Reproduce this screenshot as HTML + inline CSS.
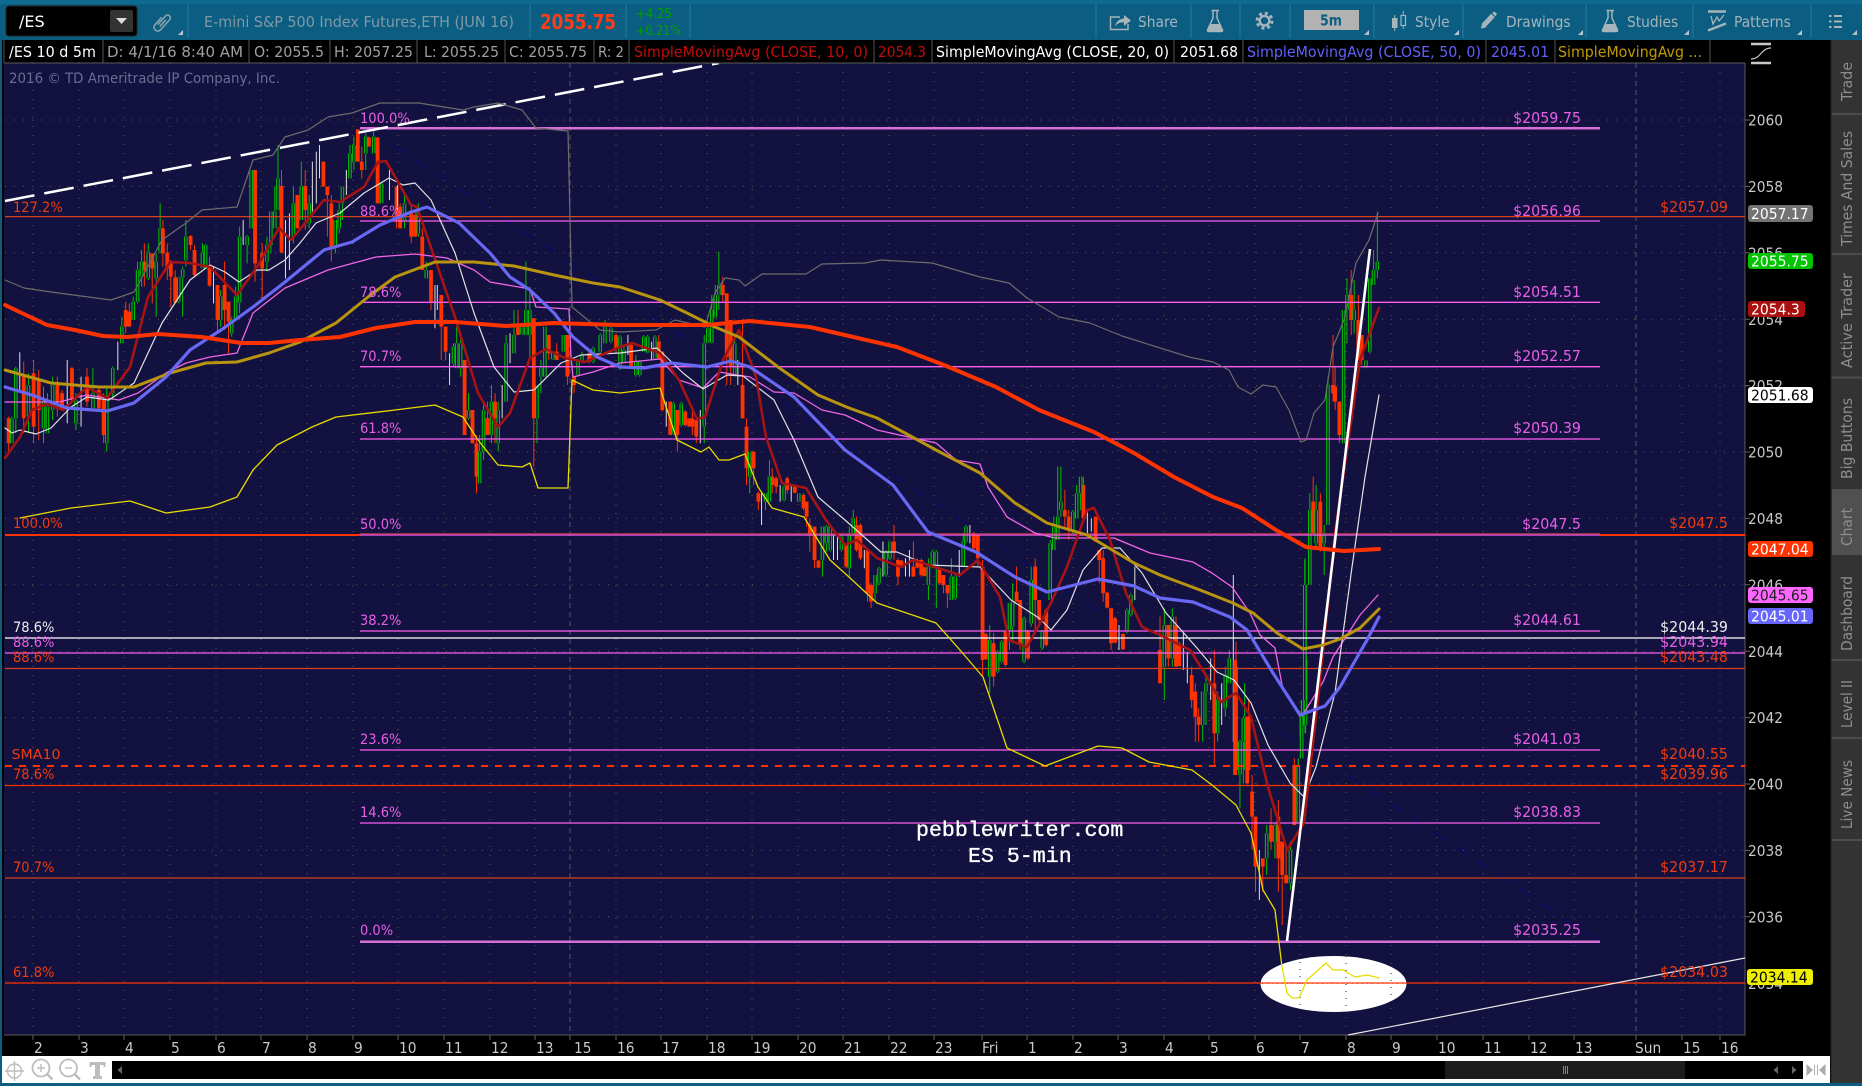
<!DOCTYPE html>
<html lang="en"><head><meta charset="utf-8"><title>/ES chart</title>
<style>
html,body{margin:0;padding:0;background:#000;width:1862px;height:1086px;overflow:hidden}
svg{display:block;position:absolute;left:0;top:0}
text{font-family:"DejaVu Sans","Liberation Sans",sans-serif;font-size:14.5px}
.t{transform:scaleX(.9);transform-box:fill-box;transform-origin:0 50%}
.e{font-size:15px;text-anchor:end;transform:scaleX(.95);transform-box:fill-box;transform-origin:100% 50%}
.ax{font-size:15.3px;fill:#c8c8c8;transform:scaleX(.9);transform-box:fill-box;transform-origin:0 50%}
.tag{font-size:15.5px;transform:scaleX(.9);transform-box:fill-box;transform-origin:0 50%}
.h{font-size:15px}
.tb{font-size:15px;fill:#a6b4bb;transform:scaleX(.92);transform-box:fill-box;transform-origin:0 50%}
.tab{font-size:15px;fill:#8e8e8e}
.pk{fill:#e85fe8}.rd{fill:#ee3c10}
path,polyline,line{vector-effect:non-scaling-stroke}
polyline{fill:none;stroke-linejoin:round;stroke-linecap:round}
.ow{stroke:#ff3300;stroke-width:1;fill:none}
.ob{stroke:#ff3300;stroke-width:3.8;fill:none}
.gw{stroke:#00c000;stroke-width:1;fill:none}
.w{stroke:#e0e0e0;stroke-width:1;fill:none}
</style></head><body>
<svg width="1862" height="1086" viewBox="0 0 1862 1086" xmlns="http://www.w3.org/2000/svg">
<!-- frame -->
<rect width="1862" height="1086" fill="#0b5d82"/>
<rect width="1862" height="4" fill="#0f6a8f"/>
<rect x="2" y="40" width="1860" height="1043" fill="#000"/>
<rect x="4" y="63" width="1741" height="972" fill="#13113f"/>
<rect x="2" y="1056" width="1828" height="27" fill="#fff"/>
<rect x="112" y="1061" width="1691" height="18" fill="#000"/>
<rect x="1445" y="1061" width="240" height="18" fill="#1c1c1c"/>
<path d="M1563.5 1066V1074M1565.5 1066V1074M1567.5 1066V1074" stroke="#888" stroke-width="1"/>
<path d="M122 1066V1074L117.5 1070ZM1778 1066V1074L1773.5 1070ZM1792 1066V1074L1796.5 1070Z" fill="#666"/>
<path d="M1813 1070L1806.5 1064V1076ZM1819 1070L1825.5 1064V1076Z" fill="#aaa"/><path d="M1814.5 1065V1075M1817.5 1065V1075" stroke="#aaa"/>
<!-- footer icons -->
<g fill="none" stroke="#bdbdbd" stroke-width="1.4">
<circle cx="14.5" cy="1071" r="7"/><path d="M14.5 1061V1081M5 1071H24"/>
<circle cx="41" cy="1068" r="8.5" stroke-width="1.8"/><path d="M47 1074L52.5 1079.5" stroke-width="2.4"/><path d="M37 1068H45M41 1064V1072"/>
<circle cx="68.5" cy="1068" r="8.5" stroke-width="1.8"/><path d="M74.5 1074L80 1079.5" stroke-width="2.4"/><path d="M65 1068H72"/>
</g>
<path d="M89.5 1062H105.5V1067H103.5V1065H100V1076H102V1079H93V1076H95V1065H91.5V1067H89.5Z" fill="#bdbdbd"/>
<!-- side tabs -->
<rect x="1831" y="40" width="31" height="1043" fill="#333"/>
<path d="M1831 114H1862M1831 254H1862M1831 377.5H1862M1831 660H1862M1831 738H1862M1831 840H1862" stroke="#4d4d4d" stroke-width="2"/>
<rect x="1832" y="489" width="30" height="66" fill="#505050"/>
<path d="M1831 40V1083" stroke="#222" stroke-width="1"/>
<text class="tab" transform="translate(1852,101) rotate(-90)" textLength="39" lengthAdjust="spacingAndGlyphs">Trade</text>
<text class="tab" transform="translate(1852,246) rotate(-90)" textLength="115" lengthAdjust="spacingAndGlyphs">Times And Sales</text>
<text class="tab" transform="translate(1852,368) rotate(-90)" textLength="95" lengthAdjust="spacingAndGlyphs">Active Trader</text>
<text class="tab" transform="translate(1852,479) rotate(-90)" textLength="81" lengthAdjust="spacingAndGlyphs">Big Buttons</text>
<text class="tab" transform="translate(1852,546) rotate(-90)" textLength="38" lengthAdjust="spacingAndGlyphs">Chart</text>
<text class="tab" transform="translate(1852,651) rotate(-90)" textLength="75" lengthAdjust="spacingAndGlyphs">Dashboard</text>
<text class="tab" transform="translate(1852,728) rotate(-90)" textLength="48" lengthAdjust="spacingAndGlyphs">Level II</text>
<text class="tab" transform="translate(1852,829) rotate(-90)" textLength="69" lengthAdjust="spacingAndGlyphs">Live News</text>
<!-- y-axis scale icon -->
<path d="M1751 44H1771M1751 63H1771" stroke="#c8c8c8" stroke-width="2.5"/><path d="M1751 59C1761 59 1761 48 1771 48" stroke="#c8c8c8" stroke-width="1.2" fill="none"/>
<!-- grid -->
<path d="M33 63V1035M79 63V1035M124 63V1035M170 63V1035M216 63V1035M261 63V1035M307 63V1035M353 63V1035M398 63V1035M444 63V1035M490 63V1035M535 63V1035M616 63V1035M661 63V1035M707 63V1035M752 63V1035M798 63V1035M843 63V1035M889 63V1035M934 63V1035M982 63V1035M1027 63V1035M1073 63V1035M1118 63V1035M1164 63V1035M1209 63V1035M1255 63V1035M1300 63V1035M1346 63V1035M1391 63V1035M1437 63V1035M1483 63V1035M1529 63V1035M1574 63V1035M1682 63V1035M1720 63V1035" stroke="#5a5a44" stroke-width="1" stroke-dasharray="1 8" fill="none"/>
<path d="M5 120H1745M5 186.4H1745M5 252.8H1745M5 319.2H1745M5 385.6H1745M5 452H1745M5 518.4H1745M5 584.8H1745M5 651.2H1745M5 717.6H1745M5 784H1745M5 850.4H1745M5 916.8H1745M5 983.2H1745" stroke="#5a5a44" stroke-width="1" stroke-dasharray="1 8" fill="none"/>
<path d="M570 63V1035M1636 63V1035" stroke="#56565c" stroke-width="1" stroke-dasharray="5 4" fill="none"/>
<path d="M33 1035V1040M79 1035V1040M124 1035V1040M170 1035V1040M216 1035V1040M261 1035V1040M307 1035V1040M353 1035V1040M398 1035V1040M444 1035V1040M490 1035V1040M535 1035V1040M570 1035V1040M616 1035V1040M661 1035V1040M707 1035V1040M752 1035V1040M798 1035V1040M843 1035V1040M889 1035V1040M934 1035V1040M982 1035V1040M1027 1035V1040M1073 1035V1040M1118 1035V1040M1164 1035V1040M1209 1035V1040M1255 1035V1040M1300 1035V1040M1346 1035V1040M1391 1035V1040M1437 1035V1040M1483 1035V1040M1529 1035V1040M1574 1035V1040M1636 1035V1040M1682 1035V1040M1720 1035V1040M1745 120H1750M1745 186.4H1750M1745 252.8H1750M1745 319.2H1750M1745 385.6H1750M1745 452H1750M1745 518.4H1750M1745 584.8H1750M1745 651.2H1750M1745 717.6H1750M1745 784H1750M1745 850.4H1750M1745 916.8H1750" stroke="#666" stroke-width="1" fill="none"/>
<path d="M4 1035H1745V63" stroke="#5a5a5a" stroke-width="1" fill="none"/>
<!-- navy diagonal -->
<line x1="370" y1="130" x2="1600" y2="942" stroke="#0a0a6a" stroke-width="1.2" stroke-dasharray="14 12"/>
<!-- ellipse -->
<ellipse cx="1333.5" cy="984" rx="73" ry="28" fill="#fff"/>
<path d="M1300 962V1010M1346 956V1012M1391 966V1004" stroke="#222" stroke-width="1" stroke-dasharray="1 6" fill="none"/>
<path d="M1262 983.2H1405" stroke="#222" stroke-width="1" stroke-dasharray="1 4" fill="none"/>
<!-- candles A -->
<g transform="translate(0,100) scale(.3954,.3333)">
<path class="ow" d="M22 950V1055M60 785V1000M85 780V1030M98 810V1020M145 830V950M157 870V930M182 800V900M220 805V920M250 860V930M262 880V1030M318 605V700M327 610V680M365 430V560M385 470V610M412 360V500M423 430V540M432 480V620M443 510V610M482 405V450M492 435V530M530 470V560M550 555V700M568 485V690M578 605V760M645 210V545M663 430V600M712 210V460M752 285V385M772 210V390M818 185V260M828 260V410M838 285V485M905 88V185M915 140V235M933 110V140M955 112V310M1003 260V385M1012 310V385M1040 310V430M1050 335V410M1068 385V510M1090 510V630M1116 585V780M1127 680V780M1175 780V1000M1195 930V1030M1205 1005V1180M1233 905V1005M1252 880V1030M1310 630V705M1350 655V1100M1388 705V780M1408 730V780M1435 705V855M1452 830V880M1490 755V790M1558 700V760"/>
<path class="ob" d="M22 955V1030M60 828V955M85 820V980M98 840V930M145 855V905M157 880V925M182 805V900M220 830V905M250 870V925M262 900V1005M318 630V680M327 635V680M365 485V510M385 460V505M412 385V460M423 458V505M432 485V530M443 532V608M482 408V435M492 450V525M530 495V557M550 555V660M568 555V630M578 605V665M645 210V490M663 460V505M712 258V458M752 285V385M772 258V330M818 185V260M828 260V285M838 310V445M905 88V185M915 185V210M933 112V140M955 112V310M1003 260V360M1012 320V385M1040 340V410M1050 345V410M1068 410V510M1090 510V605M1116 585V680M1127 680V755M1175 780V1005M1195 930V1030M1205 1030V1130M1233 955V1005M1252 905V955M1310 680V705M1350 655V955M1388 705V760M1408 755V780M1435 705V830M1452 830V855M1490 760V785M1558 705V745"/>
<path class="gw" d="M30 950V1030M40 800V1000M72 820V1000M110 860V1030M120 880V1000M133 830V960M192 880V990M235 805V930M270 860V1055M285 800V900M308 650V730M337 590V660M348 485V610M358 450V560M375 430V540M395 460V650M405 310V460M452 530V610M462 500V650M470 360V500M512 430V500M520 432V500M558 570V680M586 650V710M596 560V660M606 380V640M625 405V490M635 210V385M675 410V515M685 335V460M695 260V385M703 135V330M742 260V430M762 185V360M782 285V385M848 360V460M858 310V400M866 260V360M885 135V235M895 110V210M925 100V210M945 90V160M965 245V310M1023 285V385M1058 310V410M1078 485V535M1147 730V800M1155 680V800M1165 700V830M1185 880V960M1213 1005V1150M1223 905V1080M1243 855V1030M1260 905V1055M1280 705V905M1300 630V760M1320 680V705M1330 485V680M1340 560V780M1358 855V1030M1368 780V880M1378 680V830M1398 755V780M1425 705V755M1462 780V830M1472 755V790M1500 740V790M1518 700V760M1530 660V730M1545 680V730"/>
<g fill="none" stroke="#00c000" stroke-width="3.6"><path id="gA" vector-effect="non-scaling-stroke" d="M30 955V1030M40 805V955M72 855V950M110 905V985M120 920V1000M133 855V930M192 900V970M235 880V925M270 895V1030M285 805V880M308 680V730M337 605V660M348 510V605M358 485V530M375 455V535M395 485V535M405 385V455M452 532V605M462 508V532M470 410V480M512 458V505M520 435V505M558 590V660M586 660V700M596 590V660M606 410V608M625 410V435M635 210V385M675 435V485M685 335V435M695 335V385M703 235V330M742 310V410M762 258V360M782 310V370M848 360V435M858 330V385M866 260V310M885 160V235M895 135V185M925 110V160M945 110V160M965 250V310M1023 310V360M1058 330V400M1078 510V535M1147 740V790M1155 730V805M1165 730V805M1185 930V955M1213 1055V1150M1223 930V1055M1243 905V1005M1260 930V1030M1280 730V905M1300 705V760M1320 682V703M1330 630V705M1340 630V705M1358 855V955M1368 805V830M1378 680V830M1398 757V778M1425 705V755M1462 785V825M1472 765V785M1500 745V785M1518 705V755M1530 680V730M1545 685V725"/></g>
<use href="#gA" stroke="#13113f" stroke-width="1.4"/>
<path class="w" d="M50 757V870M170 780V970M205 830V980M298 725V810M540 500V610M615 360V435M722 360V535M732 340V510M790 185V335M800 155V310M808 135V235M876 210V285M985 210V300M1005 255V330M1100 555V685M1106 555V630M1137 760V855M1270 855V955M1290 700V790"/>
</g>
<!-- candles B -->
<g transform="translate(620,230) scale(.3954,.3333)">
<path class="ow" d="M28 340V410M98 315V385M107 365V545M127 515V615M145 540V665M165 540V590M175 565V590M183 540V615M193 565V640M260 140V215M270 190V465M280 270V465M310 280V565M320 565V765M338 665V765M350 785V840M385 715V790M395 740V790M423 740V790M442 765V790M464 790V840M472 815V890M480 865V965M492 890V1015M502 990V1015M572 940V1015M598 860V965M608 880V990M626 960V1115M635 1060V1135M693 885V990M703 985V1065M712 990V1015M742 935V1040M752 985V1015M762 985V1040M770 1010V1040M808 1010V1065M818 1035V1090M828 1065V1135M895 905V960M905 915V1010M917 990V1341M925 1210V1290M945 1210V1370M975 1200V1310M1003 1010V1115M1012 1110V1260M1032 1200V1290M1050 985V1200M1060 1110V1190M1078 1135V1250M1125 780V890M1135 840V930M1172 740V865M1203 860V935M1212 960V1060M1222 960V1115M1232 1085V1135M1242 1135V1260M1252 1160V1240M1272 1210V1260"/>
<path class="ob" d="M28 345V410M98 335V385M107 365V540M127 515V615M145 540V615M165 545V585M175 565V590M183 565V590M193 570V620M260 165V195M270 190V380M280 270V410M310 465V565M320 590V715M338 665V715M350 790V815M385 740V765M395 745V770M423 745V780M442 770V788M464 795V835M472 815V860M480 885V915M492 890V990M502 992V1013M572 945V1010M598 885V960M608 885V985M626 960V1090M635 1065V1115M693 935V965M703 990V1040M712 992V1013M742 1010V1040M752 990V1013M762 990V1035M770 1012V1038M808 1015V1060M818 1035V1065M828 1065V1090M895 910V955M905 915V985M917 1010V1290M925 1212V1288M945 1240V1340M975 1205V1305M1003 1085V1115M1012 1110V1240M1032 1205V1285M1050 1010V1110M1060 1110V1170M1078 1140V1245M1125 840V860M1135 860V900M1172 765V865M1203 860V935M1212 960V990M1222 985V1090M1232 1088V1133M1242 1135V1240M1252 1165V1238M1272 1212V1258"/>
<path class="gw" d="M0 315V420M10 345V400M40 375V440M50 395V440M60 315V365M70 315V370M88 315V390M135 515V615M155 515V590M213 315V640M222 290V340M232 195V340M241 165V265M250 65V240M290 315V440M328 665V790M368 790V840M378 690V815M415 765V815M452 790V815M512 890V1040M522 885V965M532 890V965M560 915V965M580 890V1040M590 840V915M645 1035V1115M655 1010V1065M673 960V1040M683 935V990M780 985V1110M790 960V1015M800 960V1135M838 985V1110M848 1035V1110M868 910V1010M875 885V940M935 1185V1390M955 1260V1330M965 1230V1300M985 1120V1260M993 1060V1240M1022 1160V1300M1040 1010V1190M1068 1200V1260M1088 930V1110M1097 860V960M1107 710V860M1115 710V860M1145 840V910M1155 765V865M1165 740V840M1282 1135V1210M1292 1090V1160"/>
<g fill="none" stroke="#00c000" stroke-width="3.6"><path id="gB" vector-effect="non-scaling-stroke" d="M0 320V415M10 360V400M40 395V435M50 395V435M60 320V365M70 320V368M88 320V385M135 520V612M155 520V585M213 340V590M222 295V338M232 240V338M241 195V262M250 165V195M290 340V438M328 665V740M368 790V815M378 740V815M415 770V810M452 790V815M512 890V990M522 890V940M532 890V960M560 920V960M580 915V1015M590 865V910M645 1035V1090M655 1015V1060M673 965V1035M683 935V985M780 1010V1065M790 965V1012M800 965V1010M838 1040V1110M848 1040V1105M868 935V1010M875 890V935M935 1230V1340M955 1265V1325M965 1235V1295M985 1120V1200M993 1115V1190M1022 1165V1295M1040 1050V1180M1068 1205V1255M1088 940V1110M1097 890V960M1107 860V930M1115 815V840M1145 845V905M1155 790V865M1165 740V790M1282 1140V1205M1292 1095V1155"/></g>
<use href="#gB" stroke="#13113f" stroke-width="1.4"/>
<path class="w" d="M20 315V375M80 335V390M117 515V590M203 540V640M298 390V465M358 790V885M405 765V815M433 765V815M540 915V990M550 915V990M618 960V1015M665 935V1040M722 985V1040M732 960V1040M858 960V1040M885 885V940M1182 840V910M1192 865V905M1262 1185V1260M1302 1010V1110"/>
</g>
<!-- candles C -->
<g transform="translate(1160,470) scale(.3333)">
<path class="ow" d="M0 440V640M25 470V590M48 440V590M58 515V590M95 590V715M106 640V815M116 715V815M163 540V885M228 515V900M266 690V900"/>
<path class="ob" d="M0 540V640M25 465V565M48 465V590M58 520V588M95 615V690M106 665V740M116 740V765M163 640V790M228 590V900M266 740V900"/>
<path class="gw" d="M13 415V690M37 415V590M128 665V815M138 620V765M173 665V815M196 590V740M208 540V640M240 815V900M254 640V900M435 265V790M424 690V810"/>
<g fill="none" stroke="#00c000" stroke-width="3.6"><path id="gC" vector-effect="non-scaling-stroke" d="M13 465V590M37 440V565M128 665V765M138 640V665M173 690V790M196 615V715M208 565V640M240 815V900M254 740V815M435 345V765M424 740V800"/></g>
<use href="#gC" stroke="#13113f" stroke-width="1.4"/>
<path class="w" d="M70 490V600M82 545V640M152 565V690M185 640V765M220 315V815"/>
</g>
<!-- candles D -->
<g transform="translate(1100,660) scale(.4859,.3333)">
<path class="ow" d="M278 0V345M303 170V370M313 345V570M320 470V695M335 595V695M352 445V570M367 420V695M375 545V795M383 570V670M400 295V495"/>
<path class="ob" d="M278 0V345M303 170V370M313 395V470M320 470V620M335 595V620M352 495V545M367 470V595M375 545V645M383 645V670M400 315V495"/>
<path class="gw" d="M288 240V445M295 170V370M343 495V645M360 490V595M392 545V690M408 295V490M415 120V295M423 0V220"/>
<g fill="none" stroke="#00c000" stroke-width="3.6"><path id="gD" vector-effect="non-scaling-stroke" d="M288 245V345M295 175V245M343 520V595M360 495V545M392 570V670M408 320V490M415 170V295M423 0V195"/></g>
<use href="#gD" stroke="#13113f" stroke-width="1.4"/>
<path class="w" d="M328 570V720"/>
</g>
<!-- candles E -->
<g transform="translate(1200,200) scale(.4223,.3333)">
<path class="ow" d="M268 830V1000M285 880V1055M315 405V605M320 500V630M330 605V730M358 210V405M375 285V480M383 405V495"/>
<path class="ob" d="M268 905V1000M285 905V1050M315 555V580M320 560V605M330 605V705M358 285V360M375 360V480M383 405V480"/>
<path class="gw" d="M248 1080V1500M260 880V1150M275 855V1050M294 975V1125M303 530V975M340 330V730M348 235V430M365 240V400M393 480V505M402 235V460M411 150V255M420 35V235"/>
<g fill="none" stroke="#00c000" stroke-width="3.6"><path id="gE" vector-effect="non-scaling-stroke" d="M248 1155V1500M260 930V1155M275 930V1030M294 1005V1030M303 555V975M340 330V730M348 285V330M365 330V360M393 482V503M402 235V455M411 210V255M420 185V210"/></g>
<use href="#gE" stroke="#13113f" stroke-width="1.4"/>
</g>
<!-- level lines -->
<path d="M360 128.3H1600" stroke="#d670d6" stroke-width="2.5" fill="none"/>
<path d="M360 221H1600M360 302.3H1600M360 366.7H1600M360 439H1600M360 535H1600M360 631H1600M360 750H1600M360 823H1600" stroke="#ff5cf0" stroke-width="1.3" fill="none"/>
<path d="M360 941.7H1600" stroke="#d670d6" stroke-width="2.5" fill="none"/>
<path d="M5 216.6H1745M5 668.5H1745M5 878H1745" stroke="#d6401c" stroke-width="1.2" fill="none"/>
<path d="M5 535H360M1600 535H1745" stroke="#ff3300" stroke-width="2" fill="none"/>
<path d="M360 533.8H1600" stroke="#c04040" stroke-width="1" fill="none"/>
<path d="M5 785.5H1745M5 983H1745" stroke="#ff3300" stroke-width="1.3" fill="none"/>
<path d="M5 638H1745" stroke="#fff" stroke-width="1.3" fill="none"/>
<path d="M5 653H1745" stroke="#ff5cf0" stroke-width="1.3" fill="none"/>
<path d="M5 766H1745" stroke="#ff3300" stroke-width="2" stroke-dasharray="7 7" fill="none"/>
<!-- trend lines -->
<line x1="5" y1="201" x2="719" y2="63" stroke="#fff" stroke-width="2.5" stroke-dasharray="30 10"/>
<line x1="1348" y1="1035" x2="1745" y2="958" stroke="#e8e8e8" stroke-width="1.2"/>
<!-- indicators -->
<polyline stroke="#6c6c6c" stroke-width="1.2" points="5,280 24,288 51,292 111,300 134,292 146,270 162,240 186,223 202,210 237,207 253,160 273,155 285,137 308,130 328,117 352,113 380,103 419,103 463,110 474,107 498,103 522,110 536,128 568,131 572,307 600,330 620,332 656,330 675,320 705,327 715,293 725,278 739,280 745,286 762,274 806,274 822,264 865,263 881,260 932,263 980,277 1009,283 1027,298 1059,317 1090,323 1122,336 1189,357 1213,362 1229,370 1238,387 1251,394 1263,385 1276,387 1289,410 1301,442 1306,440 1314,413 1325,400 1333,347 1344,320 1356,263 1369,240 1378,213"/>
<polyline stroke="#e6dc00" stroke-width="1.3" points="20,518 71,508 130,501 166,513 210,507 237,497 253,470 277,445 312,427 336,417 395,410 435,405 463,417 478,440 498,465 522,467 530,463 538,488 568,488 572,380 593,390 620,393 660,388 677,440 701,452 709,447 719,460 729,460 745,454 758,487 772,508 804,517 830,560 849,577 877,603 936,623 960,650 983,677 1007,748 1045,766 1098,746 1122,748 1149,762 1192,770 1212,785 1236,805 1251,833 1263,890 1275,910 1282,967 1287,993 1292,998 1299,998 1307,980 1326,963 1333,970 1343,970 1355,977 1367,975 1379,978"/>
<polyline stroke="#f066e6" stroke-width="1.3" points="5,402 59,402 87,395 119,400 138,393 166,373 186,363 210,357 237,353 253,313 285,288 328,270 376,257 415,254 447,258 474,270 490,282 530,289 536,307 569,309 571,357 573,377 593,372 620,363 660,359 679,380 703,388 719,372 750,377 774,392 794,393 822,410 845,415 877,430 913,438 936,443 956,460 980,464 988,487 1007,517 1035,533 1055,538 1114,538 1150,553 1193,562 1212,573 1232,587 1250,613 1260,635 1275,648 1283,690 1302,716 1323,682 1333,657 1360,615 1378,595"/>
<polyline stroke="#e2e2e2" stroke-width="1.2" points="5,428 12,433 20,430 36,434 51,428 71,407 87,397 109,400 134,383 162,323 190,280 210,265 225,272 239,282 257,270 269,270 285,260 300,243 316,223 340,213 364,193 389,178 403,185 415,183 431,200 455,253 474,313 494,367 514,392 534,390 561,363 581,355 620,353 657,348 683,373 703,389 727,375 743,376 774,400 794,440 818,497 845,520 881,552 897,552 928,565 980,567 1011,600 1039,618 1051,630 1067,610 1083,570 1102,548 1120,548 1142,573 1166,613 1197,648 1217,672 1234,680 1251,703 1268,745 1290,783 1304,797 1316,767 1328,720 1335,693 1352,567 1365,477 1379,395"/>
<polyline stroke="#a51414" stroke-width="2.6" points="5,458 20,437 32,410 47,404 63,410 87,387 107,398 130,367 148,297 170,262 190,263 210,267 237,295 257,267 279,228 291,240 324,200 340,202 364,187 378,162 386,161 411,205 417,207 455,317 478,393 498,427 510,413 530,358 546,349 565,358 585,362 620,347 632,343 660,353 679,380 697,419 705,417 723,360 739,330 756,377 766,437 782,483 806,488 826,520 845,545 857,540 877,558 901,567 913,560 944,570 960,575 978,560 1000,597 1009,640 1027,647 1051,603 1067,567 1087,510 1094,508 1110,540 1126,593 1142,627 1160,635 1190,650 1207,677 1221,702 1236,693 1251,717 1268,787 1287,850 1304,823 1319,690 1335,533 1360,360 1379,308"/>
<line x1="1287" y1="941" x2="1370" y2="249" stroke="#fff" stroke-width="2.6"/>
<polyline stroke="#b8940f" stroke-width="3" points="5,370 51,383 99,387 134,387 170,373 206,363 237,362 269,353 300,342 336,323 368,297 395,277 435,262 474,262 514,266 554,275 593,283 620,287 660,300 687,313 715,327 739,337 778,367 818,395 849,408 877,418 905,433 936,450 980,473 1015,503 1047,523 1087,535 1134,563 1160,575 1200,590 1233,603 1253,613 1277,633 1303,649 1323,645 1340,639 1360,628 1379,609"/>
<polyline stroke="#6868f4" stroke-width="3.2" points="5,387 32,395 67,408 107,411 134,403 166,377 190,350 221,330 253,307 285,282 324,250 352,242 380,225 411,212 427,207 459,223 490,253 510,277 530,290 554,313 573,337 597,357 620,367 644,368 671,363 707,367 731,361 750,367 794,397 845,450 893,485 928,532 976,552 1015,577 1047,592 1098,579 1134,586 1160,598 1193,602 1230,617 1247,630 1273,673 1300,715 1325,706 1340,687 1367,640 1379,617"/>
<polyline stroke="#ff3300" stroke-width="4" points="5,305 47,325 75,330 103,336 127,337 158,334 202,337 241,343 269,343 300,340 340,337 376,328 415,322 455,322 506,326 554,323 620,325 707,325 750,321 810,327 897,347 944,365 996,387 1039,410 1094,432 1134,453 1174,477 1213,497 1242,508 1276,530 1306,547 1344,551 1379,549"/>
<!-- labels -->
<g>
<text x="9" y="83" fill="#6c6c90" textLength="271" lengthAdjust="spacingAndGlyphs">2016 © TD Ameritrade IP Company, Inc.</text>
<text class="t rd" x="13" y="212">127.2%</text>
<text class="t rd" x="13" y="528">100.0%</text>
<text class="t" x="13" y="632" fill="#eee">78.6%</text>
<text class="t pk" x="13" y="647">88.6%</text>
<text class="t rd" x="13" y="662">88.6%</text>
<text class="rd" x="11.5" y="759" style="font-size:13.5px" textLength="49" lengthAdjust="spacingAndGlyphs">SMA10</text>
<text class="t rd" x="13" y="779">78.6%</text>
<text class="t rd" x="13" y="872">70.7%</text>
<text class="t rd" x="13" y="977">61.8%</text>
<text class="t pk" x="360" y="123">100.0%</text>
<text class="t pk" x="360" y="216">88.6%</text>
<text class="t pk" x="360" y="297">78.6%</text>
<text class="t pk" x="360" y="361">70.7%</text>
<text class="t pk" x="360" y="433">61.8%</text>
<text class="t pk" x="360" y="529">50.0%</text>
<text class="t pk" x="360" y="625">38.2%</text>
<text class="t pk" x="360" y="744">23.6%</text>
<text class="t pk" x="360" y="817">14.6%</text>
<text class="t pk" x="360" y="935">0.0%</text>
<text class="e pk" x="1581" y="123">$2059.75</text>
<text class="e pk" x="1581" y="216">$2056.96</text>
<text class="e pk" x="1581" y="297">$2054.51</text>
<text class="e pk" x="1581" y="361">$2052.57</text>
<text class="e pk" x="1581" y="433">$2050.39</text>
<text class="e pk" x="1581" y="529">$2047.5</text>
<text class="e pk" x="1581" y="625">$2044.61</text>
<text class="e pk" x="1581" y="744">$2041.03</text>
<text class="e pk" x="1581" y="817">$2038.83</text>
<text class="e pk" x="1581" y="935">$2035.25</text>
<text class="e rd" x="1728" y="212">$2057.09</text>
<text class="e rd" x="1728" y="528">$2047.5</text>
<text class="e" x="1728" y="632" fill="#eee">$2044.39</text>
<text class="e pk" x="1728" y="647">$2043.94</text>
<text class="e rd" x="1728" y="662">$2043.48</text>
<text class="e rd" x="1728" y="759">$2040.55</text>
<text class="e rd" x="1728" y="779">$2039.96</text>
<text class="e rd" x="1728" y="872">$2037.17</text>
<text class="e rd" x="1728" y="977">$2034.03</text>
</g>
<text x="916" y="836" fill="#fff" stroke="#fff" stroke-width=".35" style="font-family:'Liberation Mono',monospace;font-size:21.6px">pebblewriter.com</text>
<text x="968" y="862" fill="#fff" stroke="#fff" stroke-width=".35" style="font-family:'Liberation Mono',monospace;font-size:21.6px">ES 5-min</text>
<!-- x axis -->
<g fill="#c4c4c4">
<text class="ax" x="34" y="1053">2</text><text class="ax" x="80" y="1053">3</text><text class="ax" x="125" y="1053">4</text><text class="ax" x="171" y="1053">5</text><text class="ax" x="217" y="1053">6</text><text class="ax" x="262" y="1053">7</text><text class="ax" x="308" y="1053">8</text><text class="ax" x="354" y="1053">9</text><text class="ax" x="399" y="1053">10</text><text class="ax" x="445" y="1053">11</text><text class="ax" x="491" y="1053">12</text><text class="ax" x="536" y="1053">13</text><text class="ax" x="574" y="1053">15</text><text class="ax" x="617" y="1053">16</text><text class="ax" x="662" y="1053">17</text><text class="ax" x="708" y="1053">18</text><text class="ax" x="753" y="1053">19</text><text class="ax" x="799" y="1053">20</text><text class="ax" x="844" y="1053">21</text><text class="ax" x="890" y="1053">22</text><text class="ax" x="935" y="1053">23</text><text class="ax" x="982" y="1053">Fri</text><text class="ax" x="1028" y="1053">1</text><text class="ax" x="1074" y="1053">2</text><text class="ax" x="1119" y="1053">3</text><text class="ax" x="1165" y="1053">4</text><text class="ax" x="1210" y="1053">5</text><text class="ax" x="1256" y="1053">6</text><text class="ax" x="1301" y="1053">7</text><text class="ax" x="1347" y="1053">8</text><text class="ax" x="1392" y="1053">9</text><text class="ax" x="1438" y="1053">10</text><text class="ax" x="1484" y="1053">11</text><text class="ax" x="1530" y="1053">12</text><text class="ax" x="1575" y="1053">13</text><text class="ax" x="1635" y="1053">Sun</text><text class="ax" x="1683" y="1053">15</text><text class="ax" x="1721" y="1053">16</text>
</g>
<!-- y axis -->
<g>
<text class="ax" x="1748" y="125.5">2060</text><text class="ax" x="1748" y="192">2058</text><text class="ax" x="1748" y="258.5">2056</text><text class="ax" x="1748" y="325">2054</text><text class="ax" x="1748" y="391">2052</text><text class="ax" x="1748" y="457.5">2050</text><text class="ax" x="1748" y="524">2048</text><text class="ax" x="1748" y="590.5">2046</text><text class="ax" x="1748" y="657">2044</text><text class="ax" x="1748" y="723">2042</text><text class="ax" x="1748" y="789.5">2040</text><text class="ax" x="1748" y="856">2038</text><text class="ax" x="1748" y="922.5">2036</text><text class="ax" x="1748" y="989">2034</text>
</g>
<!-- price tags -->
<rect x="1748" y="205" width="65" height="17" rx="3" fill="#737373"/><text class="tag" x="1751" y="219" fill="#fff">2057.17</text>
<rect x="1748" y="253" width="65" height="16" rx="3" fill="#00c400"/><text class="tag" x="1751" y="266.5" fill="#fff">2055.75</text>
<rect x="1748" y="301" width="57" height="16" rx="3" fill="#aa1010"/><text class="tag" x="1751" y="314.5" fill="#fff">2054.3</text>
<rect x="1748" y="387" width="65" height="16" rx="3" fill="#fff"/><text class="tag" x="1751" y="400.5" fill="#000">2051.68</text>
<rect x="1748" y="541" width="65" height="16" rx="3" fill="#ff3300"/><text class="tag" x="1751" y="554.5" fill="#fff">2047.04</text>
<rect x="1748" y="587" width="65" height="16" rx="3" fill="#ff66ff"/><text class="tag" x="1751" y="600.5" fill="#222">2045.65</text>
<rect x="1748" y="608" width="65" height="16" rx="3" fill="#6666ff"/><text class="tag" x="1751" y="621.5" fill="#fff">2045.01</text>
<rect x="1747" y="969" width="66" height="16" rx="3" fill="#eeee00"/><text class="tag" x="1750" y="982.5" fill="#000">2034.14</text>
<!-- chart header -->
<rect x="4" y="40" width="1706" height="23" fill="#000"/>
<path d="M4 63H1745" stroke="#5a5a5a" stroke-width="1"/>
<path d="M4 40V63M103 40V63M249 40V63M330 40V63M417 40V63M505 40V63M594 40V63M629 40V63M874 40V63M932 40V63M1174 40V63M1243 40V63M1486 40V63M1555 40V63M1710 40V63" stroke="#555" stroke-width="1"/>
<g>
<text class="h" x="9" y="57" fill="#fff" textLength="87" lengthAdjust="spacingAndGlyphs">/ES 10 d 5m</text>
<text class="h" x="107" y="57" fill="#a0a0a0" textLength="136" lengthAdjust="spacingAndGlyphs">D: 4/1/16 8:40 AM</text>
<text class="h" x="254" y="57" fill="#a0a0a0" textLength="70" lengthAdjust="spacingAndGlyphs">O: 2055.5</text>
<text class="h" x="334" y="57" fill="#a0a0a0" textLength="79" lengthAdjust="spacingAndGlyphs">H: 2057.25</text>
<text class="h" x="424" y="57" fill="#a0a0a0" textLength="75" lengthAdjust="spacingAndGlyphs">L: 2055.25</text>
<text class="h" x="509" y="57" fill="#a0a0a0" textLength="78" lengthAdjust="spacingAndGlyphs">C: 2055.75</text>
<text class="h" x="598" y="57" fill="#a0a0a0" textLength="26" lengthAdjust="spacingAndGlyphs">R: 2</text>
<text class="h" x="634" y="57" fill="#c00c0c" textLength="234" lengthAdjust="spacingAndGlyphs">SimpleMovingAvg (CLOSE, 10, 0)</text>
<text class="h" x="878" y="57" fill="#c00c0c" textLength="48" lengthAdjust="spacingAndGlyphs">2054.3</text>
<text class="h" x="936" y="57" fill="#fff" textLength="233" lengthAdjust="spacingAndGlyphs">SimpleMovingAvg (CLOSE, 20, 0)</text>
<text class="h" x="1180" y="57" fill="#fff" textLength="58" lengthAdjust="spacingAndGlyphs">2051.68</text>
<text class="h" x="1247" y="57" fill="#6060ff" textLength="234" lengthAdjust="spacingAndGlyphs">SimpleMovingAvg (CLOSE, 50, 0)</text>
<text class="h" x="1491" y="57" fill="#6060ff" textLength="58" lengthAdjust="spacingAndGlyphs">2045.01</text>
<text class="h" x="1558" y="57" fill="#c09a00" textLength="144" lengthAdjust="spacingAndGlyphs">SimpleMovingAvg ...</text>
</g>
<!-- top toolbar -->
<rect x="6" y="6" width="131" height="30" rx="3" fill="#000" stroke="#222"/>
<text x="19" y="27" fill="#fff" style="font-size:16px">/ES</text>
<rect x="110" y="10" width="23" height="22" rx="2" fill="#333"/>
<path d="M116 18H127L121.5 24Z" fill="#ddd"/>
<g transform="translate(163,22.5) rotate(42)" fill="none" stroke="#8aa2ae" stroke-width="1.6"><path d="M-2.5 5V-6.5a2.8 2.8 0 0 1 5.6 0V7a3.8 3.8 0 0 1-7.6 0V-3"/><path d="M0.3 -4V5"/></g>
<path d="M188 4V38M530 4V38M626 4V38M690 4V38M1096 4V38M1191 4V38M1240 4V38M1290 4V38M1374 4V38M1463 4V38M1586 4V38M1693 4V38M1811 4V38" stroke="#1a7396" stroke-width="1.5"/>
<text x="204" y="27" fill="#7f99a6" style="font-size:15px" textLength="310" lengthAdjust="spacingAndGlyphs">E-mini S&amp;P 500 Index Futures,ETH (JUN 16)</text>
<text x="540" y="29" fill="#ff3c14" style="font-size:20px;font-weight:bold" textLength="76" lengthAdjust="spacingAndGlyphs">2055.75</text>
<text x="636" y="18" fill="#00a000" style="font-size:13px" textLength="36" lengthAdjust="spacingAndGlyphs">+4.25</text>
<text x="636" y="35" fill="#00a000" style="font-size:13px" textLength="45" lengthAdjust="spacingAndGlyphs">+0.21%</text>
<path d="M183 30V35H178ZM1369 30V35H1364ZM1459 30V35H1454ZM1583 30V35H1578ZM1689 30V35H1684ZM1802 30V35H1797ZM1857 30V35H1852Z" fill="#b8c4ca"/>
<!-- share -->
<g stroke="#a6b4bb" fill="none" stroke-width="1.4"><path d="M1120 17H1110.5V29.5H1128V24"/></g>
<path d="M1115 27C1116 21 1120 18.5 1124 18.5V15L1131 20.5L1124 26V22.5C1120 22 1117 23.5 1115 27Z" fill="#a6b4bb"/>
<text class="tb" x="1138" y="27">Share</text>
<!-- flask 1 -->
<g stroke="#a6b4bb" fill="none" stroke-width="1.5"><path d="M1211.5 10.5H1219M1213 11V18L1207.5 30Q1207 31.5 1209 31.5H1221Q1223 31.5 1222.5 30L1217 18V11"/></g>
<path d="M1210.5 24H1219.5L1222.5 31.5H1207.5Z" fill="#a6b4bb"/>
<!-- gear -->
<circle cx="1264.5" cy="20.7" r="7.5" fill="none" stroke="#a6b4bb" stroke-width="3" stroke-dasharray="3 2.9"/>
<circle cx="1264.5" cy="20.7" r="4.8" fill="none" stroke="#a6b4bb" stroke-width="2.4"/>
<!-- 5m -->
<rect x="1304" y="10" width="55" height="20" fill="#b2b2b2"/>
<text x="1320" y="25.5" fill="#0b5d82" style="font-size:15px;font-weight:bold" textLength="22" lengthAdjust="spacingAndGlyphs">5m</text>
<!-- style icon -->
<rect x="1392" y="18" width="5.5" height="10" fill="#a6b4bb"/><path d="M1394.7 15V31" stroke="#a6b4bb"/>
<rect x="1401" y="15.5" width="4.5" height="10" fill="none" stroke="#a6b4bb" stroke-width="1.2"/><path d="M1403.2 11V15M1403.2 25V29" stroke="#a6b4bb"/>
<text class="tb" x="1415" y="27">Style</text>
<!-- pencil -->
<path d="M1483.5 25.5L1493 15.5" stroke="#a6b4bb" stroke-width="5"/><path d="M1481 28.5L1482 23.5L1486 27.5ZM1492 13L1494.5 11.5L1497 14L1495.5 16.5Z" fill="#a6b4bb"/>
<text class="tb" x="1506" y="27">Drawings</text>
<!-- flask 2 -->
<g stroke="#a6b4bb" fill="none" stroke-width="1.5"><path d="M1606.5 10.5H1614M1608 11V18L1602.5 30Q1602 31.5 1604 31.5H1616Q1618 31.5 1617.5 30L1612 18V11"/></g>
<path d="M1605.5 24H1614.5L1617.5 31.5H1602.5Z" fill="#a6b4bb"/>
<text class="tb" x="1627" y="27">Studies</text>
<!-- patterns -->
<path d="M1708 11.5H1726" stroke="#a6b4bb" stroke-width="2.5"/><path d="M1708 30.5L1726 23.5" stroke="#a6b4bb" stroke-width="2.5"/><path d="M1711 16L1713 24L1717 17L1719 21L1724 15" stroke="#a6b4bb" fill="none" stroke-width="1.3"/>
<text class="tb" x="1734" y="27">Patterns</text>
<!-- list -->
<path d="M1829 16H1831.5M1829 21.5H1831.5M1829 27H1831.5M1834 16H1842M1834 21.5H1842M1834 27H1842" stroke="#a6b4bb" stroke-width="2" fill="none"/>
</svg>
</body></html>
